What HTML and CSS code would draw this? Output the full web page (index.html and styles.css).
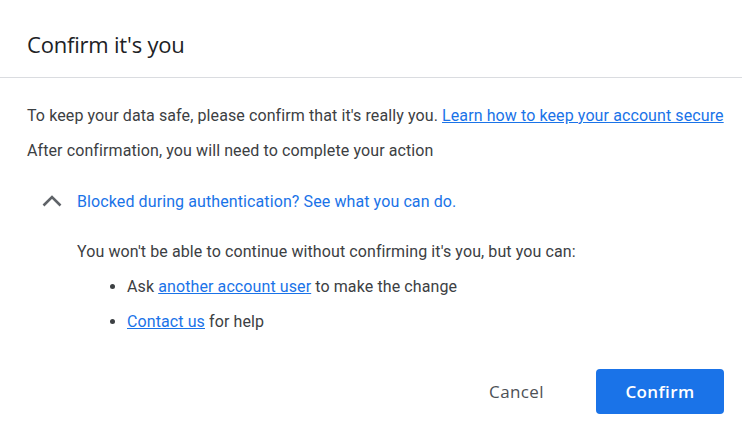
FILE: index.html
```html
<!DOCTYPE html>
<html>
<head>
<meta charset="utf-8">
<link rel="stylesheet" href="styles.css">
</head>
<body>
<div class="dialog">
  <header class="head">
    <h1 class="title">Confirm it's you</h1>
  </header>
  <main class="content">
    <p class="line">To keep your data safe, please confirm that it's really you. <a class="link" href="#">Learn how to keep your account secure</a></p>
    <p class="line">After confirmation, you will need to complete your action</p>
    <div class="expander">
      <svg class="chev" width="20" height="12" viewBox="0 0 20 12"><path d="M1.5 10.5 L10 2 L18.5 10.5" fill="none" stroke="#5f6368" stroke-width="2.6"/></svg>
      <span class="blue">Blocked during authentication? See what you can do.</span>
    </div>
    <div class="details">
      <p class="line">You won't be able to continue without confirming it's you, but you can:</p>
      <ul class="list">
        <li>Ask <a class="link" href="#">another account user</a> to make the change</li>
        <li><a class="link" href="#">Contact us</a> for help</li>
      </ul>
    </div>
  </main>
  <footer class="actions">
    <button class="btn cancel">Cancel</button>
    <button class="btn confirm">Confirm</button>
  </footer>
</div>
</body>
</html>
```
FILE: styles.css
```css
html, body { margin: 0; padding: 0; background: #fff; }
body { font-family: Roboto, "Noto Sans", sans-serif; color: #3c4043; width: 742px; height: 440px; overflow: hidden; }
.dialog { display: flex; flex-direction: column; }
.head { height: 67px; padding: 10px 27px 0; border-bottom: 1px solid #dadce0; display: flex; align-items: center; }
.title { margin: 0; font-family: "Open Sans", Roboto, sans-serif; font-weight: 400; font-size: 22px; color: #202124; letter-spacing: -0.2px; }
.content { padding: 26px 0 0 27px; font-size: 16px; letter-spacing: 0.1px; display: flex; flex-direction: column; gap: 11px; }
.line { margin: 0; line-height: 24px; white-space: nowrap; }
.link { color: #1a73e8; text-decoration: underline; }
.blue { color: #1a73e8; }
.expander { display: flex; align-items: center; gap: 15px; margin-top: 15px; padding-left: 15px; height: 24px; }
.chev { display: block; margin-top: -1px; }
.details { padding-left: 50px; margin-top: 16px; display: flex; flex-direction: column; gap: 11px; }
.list { margin: 0; padding-left: 50px; list-style: disc; display: flex; flex-direction: column; gap: 11px; }
.list li { line-height: 24px; }
.actions { display: flex; justify-content: flex-end; align-items: center; gap: 28px; padding: 0 18px 0 0; margin-top: 35px; }
.btn { font-family: "Open Sans", Roboto, sans-serif; font-size: 17px; letter-spacing: 0.4px; border: none; border-radius: 4px; height: 45px; cursor: pointer; }
.cancel { background: none; color: #4d5156; padding: 0 24px; font-weight: 500; }
.confirm { background: #1a73e8; color: #fff; width: 128px; font-weight: 600; }
```
